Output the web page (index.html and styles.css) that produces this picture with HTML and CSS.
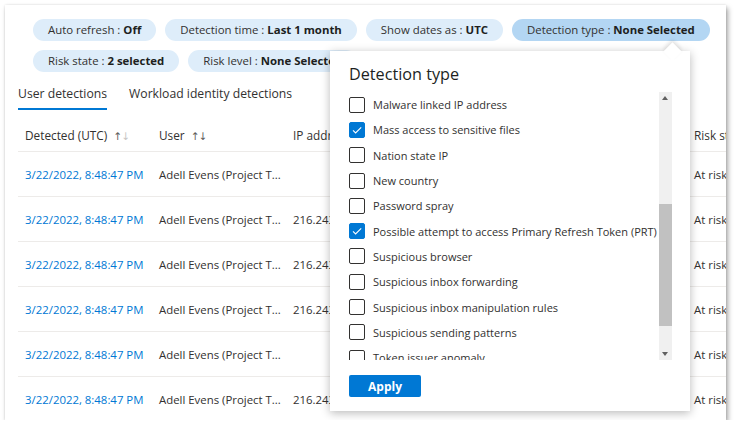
FILE: index.html
```html
<!DOCTYPE html>
<html>
<head>
<meta charset="utf-8">
<link rel="stylesheet" href="styles.css">
</head>
<body>
<div class="frame">
  <div class="filters">
    <div class="pill-row">
      <span class="pill">Auto refresh : <b>Off</b></span>
      <span class="pill">Detection time : <b>Last 1 month</b></span>
      <span class="pill">Show dates as : <b>UTC</b></span>
      <span class="pill active">Detection type : <b>None Selected</b></span>
    </div>
    <div class="pill-row">
      <span class="pill">Risk state : <b>2 selected</b></span>
      <span class="pill">Risk level : <b>None Selected</b></span>
    </div>
  </div>
  <div class="tabs">
    <span class="tab selected">User detections</span>
    <span class="tab">Workload identity detections</span>
  </div>
  <div class="table">
    <div class="row head">
      <span class="c1">Detected (UTC) <span class="sort">↑<span class="dim">↓</span></span></span>
      <span class="c2">User <span class="sort">↑↓</span></span>
      <span class="c3">IP address</span>
      <span class="c4">Risk state</span>
    </div>
    <div class="row"><span class="c1 link">3/22/2022, 8:48:47 PM</span><span class="c2">Adell Evens (Project T...</span><span class="c3"></span><span class="c4">At risk</span></div>
    <div class="row"><span class="c1 link">3/22/2022, 8:48:47 PM</span><span class="c2">Adell Evens (Project T...</span><span class="c3">216.243.12.5</span><span class="c4">At risk</span></div>
    <div class="row"><span class="c1 link">3/22/2022, 8:48:47 PM</span><span class="c2">Adell Evens (Project T...</span><span class="c3">216.243.12.5</span><span class="c4">At risk</span></div>
    <div class="row"><span class="c1 link">3/22/2022, 8:48:47 PM</span><span class="c2">Adell Evens (Project T...</span><span class="c3">216.243.12.5</span><span class="c4">At risk</span></div>
    <div class="row"><span class="c1 link">3/22/2022, 8:48:47 PM</span><span class="c2">Adell Evens (Project T...</span><span class="c3"></span><span class="c4">At risk</span></div>
    <div class="row"><span class="c1 link">3/22/2022, 8:48:47 PM</span><span class="c2">Adell Evens (Project T...</span><span class="c3">216.243.12.5</span><span class="c4">At risk</span></div>
  </div>

  <div class="popup">
    <div class="caret"></div>
    <div class="popup-title">Detection type</div>
    <div class="list-wrap">
      <div class="list">
        <label class="item"><span class="cb"></span>Malware linked IP address</label>
        <label class="item"><span class="cb on"><svg viewBox="0 0 16 16" width="16" height="16"><path d="M4 8.3l2.6 2.6L12.2 5.3" fill="none" stroke="#fff" stroke-width="1.1"/></svg></span>Mass access to sensitive files</label>
        <label class="item"><span class="cb"></span>Nation state IP</label>
        <label class="item"><span class="cb"></span>New country</label>
        <label class="item"><span class="cb"></span>Password spray</label>
        <label class="item"><span class="cb on"><svg viewBox="0 0 16 16" width="16" height="16"><path d="M4 8.3l2.6 2.6L12.2 5.3" fill="none" stroke="#fff" stroke-width="1.1"/></svg></span>Possible attempt to access Primary Refresh Token (PRT)</label>
        <label class="item"><span class="cb"></span>Suspicious browser</label>
        <label class="item"><span class="cb"></span>Suspicious inbox forwarding</label>
        <label class="item"><span class="cb"></span>Suspicious inbox manipulation rules</label>
        <label class="item"><span class="cb"></span>Suspicious sending patterns</label>
        <label class="item"><span class="cb"></span>Token issuer anomaly</label>
      </div>
      <div class="scrollbar">
        <div class="arrow up"></div>
        <div class="track"><div class="thumb"></div></div>
        <div class="arrow down"></div>
      </div>
    </div>
    <button class="apply">Apply</button>
  </div>
</div>
</body>
</html>
```

FILE: styles.css
```css
* { box-sizing: border-box; }
html, body { margin: 0; padding: 0; background: #fff; }
body {
  font-family: "Open Sans", "Noto Sans", sans-serif;
  font-size: 11.4px;
  color: #323130;
}
.frame {
  position: relative;
  margin: 5px 0 0 5px;
  width: 721px;
  height: 415px;
  overflow: hidden;
  background: #fff;
  box-shadow: 2px 3px 5px rgba(0,0,0,0.35), 0 0 2px rgba(0,0,0,0.12);
}
.filters {
  padding: 14px 0 0 28px;
  display: flex;
  flex-direction: column;
  gap: 9px;
}
.pill-row { display: flex; gap: 9px; white-space: nowrap; }
.pill {
  height: 22px;
  line-height: 22px;
  padding: 0 15px;
  border-radius: 11px;
  background: #deedfa;
  color: #323130;
  font-size: 11.4px;
}
.pill b { font-weight: 700; color: #201f1e; }
.pill.active { background: #b3d6f3; }
.tabs {
  display: flex;
  gap: 22px;
  padding: 13px 0 0 13px;
}
.tab {
  font-size: 12.2px;
  line-height: 18px;
  padding-bottom: 5px;
  border-bottom: 2px solid transparent;
}
.tab.selected { border-bottom-color: #0078d4; }
.table { padding: 8px 0 0 13px; }
.row {
  display: flex;
  height: 45px;
  align-items: center;
  border-bottom: 1px solid #edebe9;
  white-space: nowrap;
}
.row.head { height: 34px; font-size: 11.8px; }
.row span.c1, .row span.c2, .row span.c3, .row span.c4 { padding-left: 7px; overflow: hidden; }
.c1 { width: 134px; flex: none; }
.c2 { width: 134px; flex: none; }
.c3 { width: 401px; flex: none; }
.c4 { width: 80px; flex: none; }
.link { color: #0078d4; }
.sort { margin-left: 3px; letter-spacing: -1px; font-family: "DejaVu Sans", sans-serif; font-size: 10.5px; color: #605e5c; }
.sort .dim { color: #c8c6c4; }
.popup {
  position: absolute;
  left: 325px;
  top: 46px;
  width: 360px;
  height: 360px;
  background: #fff;
  box-shadow: 0 2px 9px rgba(0,0,0,0.28);
  padding: 12px 18px 0 19px;
  display: flex;
  flex-direction: column;
}
.caret {
  position: absolute;
  top: -6px;
  left: 336px;
  width: 13px;
  height: 13px;
  background: #fff;
  transform: rotate(45deg);
  box-shadow: -2px -2px 4px rgba(0,0,0,0.12);
}
.popup-title {
  position: relative;
  font-size: 16.2px;
  line-height: 22px;
  color: #201f1e;
  margin-bottom: 7px;
}
.list-wrap {
  display: flex;
  height: 268px;
}
.list {
  flex: 1;
  overflow: hidden;
}
.item {
  display: flex;
  align-items: center;
  height: 25.3px;
  gap: 8px;
  white-space: nowrap;
  font-size: 11px;
}
.cb {
  width: 16px;
  height: 16px;
  flex: none;
  border: 1px solid #323130;
  border-radius: 2px;
  display: flex;
}
.cb.on { background: #0078d4; border-color: #0078d4; }
.cb.on svg { margin: -1px; }
.scrollbar {
  width: 13px;
  flex: none;
  background: #f0f0f0;
  display: flex;
  flex-direction: column;
  margin-left: 2px;
}
.arrow { height: 13px; flex: none; position: relative; }
.arrow.up::after, .arrow.down::after {
  content: "";
  position: absolute;
  left: 3px;
  border-left: 3.5px solid transparent;
  border-right: 3.5px solid transparent;
}
.arrow.up::after { top: 4px; border-bottom: 4px solid #606060; }
.arrow.down::after { top: 5px; border-top: 4px solid #606060; }
.track { flex: 1; position: relative; }
.thumb {
  position: absolute;
  left: 0;
  right: 0;
  top: 99px;
  height: 122px;
  background: #c1c1c1;
}
.apply {
  margin-top: 15px;
  width: 72px;
  height: 22px;
  background: #0078d4;
  color: #fff;
  border: none;
  border-radius: 2px;
  font-family: "Open Sans", "Noto Sans", sans-serif;
  font-weight: 700;
  font-size: 12px;
  padding: 0;
}
```
